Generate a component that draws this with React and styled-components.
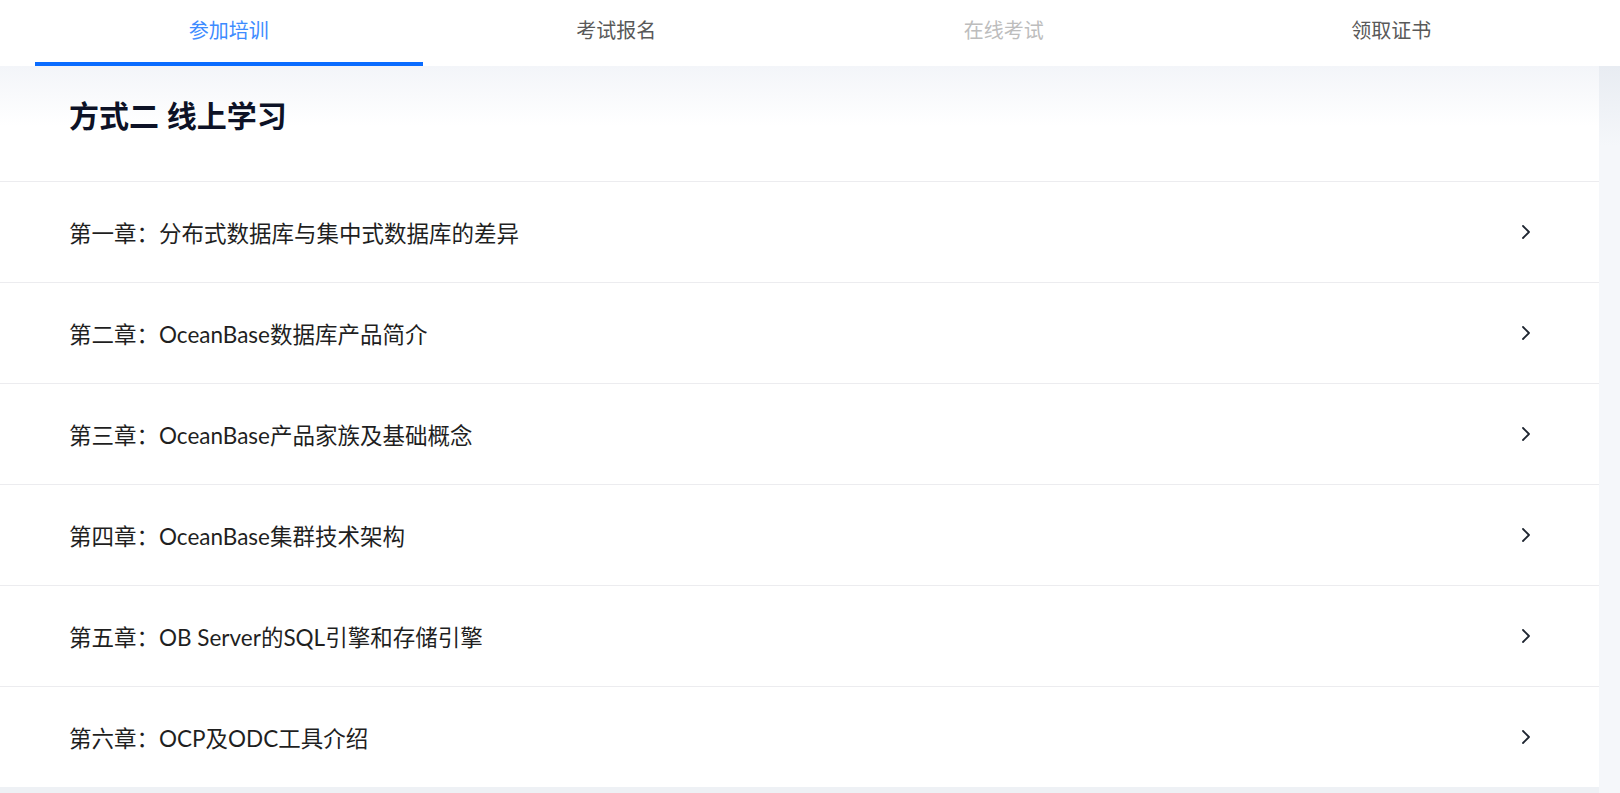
import styled, { createGlobalStyle } from "styled-components";

const GlobalStyle = createGlobalStyle`
    html, body {
        margin: 0;
        padding: 0;
        background: #f5f7fa;
        font-family: "Open Sans", "Noto Sans CJK SC", sans-serif;
    }
`;

const Pagina = styled.div`
    width: 1620px;
    height: 793px;
    overflow: hidden;
    display: flex;
    flex-direction: column;
`;

const Pestanas = styled.nav`
    display: flex;
    height: 66px;
    padding: 0 35px;
    background: #ffffff;
    flex-shrink: 0;
`;

const Pestana = styled.div`
    flex: 1;
    display: flex;
    align-items: center;
    justify-content: center;
    box-sizing: border-box;
    padding-bottom: ${({ $activa }) => ($activa ? "4px" : "8px")};
    font-size: 20px;
    color: ${({ $color }) => $color};
    border-bottom: ${({ $activa }) => ($activa ? "4px solid #0a6cff" : "none")};
    cursor: pointer;
`;

const Cuerpo = styled.div`
    flex: 1;
    display: flex;
    background: linear-gradient(#e8ecf2, #f5f7fa 80px);
`;

const Tarjeta = styled.section`
    width: 1599px;
    background: linear-gradient(#f3f5f9, #ffffff 60px);
    border-bottom: 6px solid #eef1f5;
    align-self: flex-start;
`;

const Titulo = styled.h2`
    margin: 0;
    padding: 30px 69px 45px;
    font-size: 30px;
    line-height: 40px;
    font-weight: 700;
    color: #0d1226;
    border-bottom: 1px solid #ececef;
`;

const Fila = styled.div`
    display: flex;
    align-items: center;
    justify-content: space-between;
    height: 100px;
    padding: 0 68px 0 69px;
    border-bottom: ${({ $ultima }) => ($ultima ? "none" : "1px solid #ececef")};
    cursor: pointer;
`;

const Capitulo = styled.span`
    font-family: "Lato", "Noto Sans CJK SC", sans-serif;
    font-size: 22.5px;
    color: #1f1f1f;
`;

const Flecha = () => (
    <svg width="10" height="16" viewBox="0 0 10 16" fill="none">
        <polyline points="2,2 8,8 2,14" stroke="#1e2530" strokeWidth="1.8" strokeLinecap="round" strokeLinejoin="round" />
    </svg>
);

const pestanas = [
    { texto: "参加培训", color: "#3d8bff", activa: true },
    { texto: "考试报名", color: "#595959" },
    { texto: "在线考试", color: "#bdbdbd" },
    { texto: "领取证书", color: "#595959" },
];

const capitulos = [
    "第一章：分布式数据库与集中式数据库的差异",
    "第二章：OceanBase数据库产品简介",
    "第三章：OceanBase产品家族及基础概念",
    "第四章：OceanBase集群技术架构",
    "第五章：OB Server的SQL引擎和存储引擎",
    "第六章：OCP及ODC工具介绍",
];

export default function App() {
    return (
        <>
            <GlobalStyle />
            <Pagina>
                <Pestanas>
                    {pestanas.map((p) => (
                        <Pestana key={p.texto} $color={p.color} $activa={p.activa}>
                            {p.texto}
                        </Pestana>
                    ))}
                </Pestanas>
                <Cuerpo>
                    <Tarjeta>
                        <Titulo>方式二 线上学习</Titulo>
                        {capitulos.map((c, i) => (
                            <Fila key={c} $ultima={i === capitulos.length - 1}>
                                <Capitulo>{c}</Capitulo>
                                <Flecha />
                            </Fila>
                        ))}
                    </Tarjeta>
                </Cuerpo>
            </Pagina>
        </>
    );
}
